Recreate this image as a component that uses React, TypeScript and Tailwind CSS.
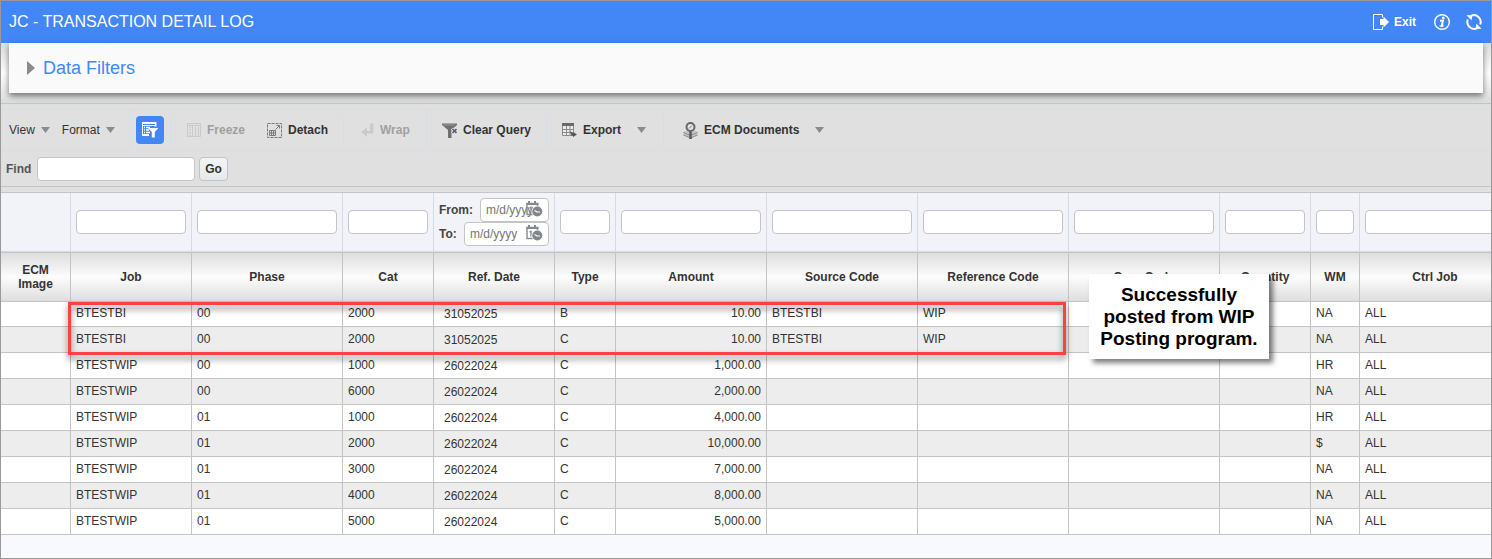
import { ReactNode } from 'react'

type Column = {
  key: string
  label: string
  width: string
  pad?: string
  filter: 'none' | 'text' | 'date'
}

const columns: Column[] = [
  { key: 'image', label: 'ECM Image', width: 'w-[70px]', filter: 'none' },
  { key: 'job', label: 'Job', width: 'w-[121px]', filter: 'text' },
  { key: 'phase', label: 'Phase', width: 'w-[151px]', filter: 'text' },
  { key: 'cat', label: 'Cat', width: 'w-[91px]', filter: 'text' },
  { key: 'date', label: 'Ref. Date', width: 'w-[121px]', pad: 'pl-[10px] pr-[5px] py-0', filter: 'date' },
  { key: 'type', label: 'Type', width: 'w-[61px]', filter: 'text' },
  { key: 'amount', label: 'Amount', width: 'w-[151px]', pad: 'px-[5px] pt-0 pb-[2px] text-right', filter: 'text' },
  { key: 'source', label: 'Source Code', width: 'w-[151px]', filter: 'text' },
  { key: 'reference', label: 'Reference Code', width: 'w-[151px]', filter: 'text' },
  { key: 'oper', label: 'Oper Code', width: 'w-[151px]', filter: 'text' },
  { key: 'quantity', label: 'Quantity', width: 'w-[91px]', filter: 'text' },
  { key: 'wm', label: 'WM', width: 'w-[49px]', filter: 'text' },
  { key: 'ctrlJob', label: 'Ctrl Job', width: 'w-[151px]', filter: 'text' },
]

const rows: Record<string, string>[] = [
  { job: 'BTESTBI', phase: '00', cat: '2000', date: '31052025', type: 'B', amount: '10.00', source: 'BTESTBI', reference: 'WIP', wm: 'NA', ctrlJob: 'ALL' },
  { job: 'BTESTBI', phase: '00', cat: '2000', date: '31052025', type: 'C', amount: '10.00', source: 'BTESTBI', reference: 'WIP', wm: 'NA', ctrlJob: 'ALL' },
  { job: 'BTESTWIP', phase: '00', cat: '1000', date: '26022024', type: 'C', amount: '1,000.00', wm: 'HR', ctrlJob: 'ALL' },
  { job: 'BTESTWIP', phase: '00', cat: '6000', date: '26022024', type: 'C', amount: '2,000.00', wm: 'NA', ctrlJob: 'ALL' },
  { job: 'BTESTWIP', phase: '01', cat: '1000', date: '26022024', type: 'C', amount: '4,000.00', wm: 'HR', ctrlJob: 'ALL' },
  { job: 'BTESTWIP', phase: '01', cat: '2000', date: '26022024', type: 'C', amount: '10,000.00', wm: '$', ctrlJob: 'ALL' },
  { job: 'BTESTWIP', phase: '01', cat: '3000', date: '26022024', type: 'C', amount: '7,000.00', wm: 'NA', ctrlJob: 'ALL' },
  { job: 'BTESTWIP', phase: '01', cat: '4000', date: '26022024', type: 'C', amount: '8,000.00', wm: 'NA', ctrlJob: 'ALL' },
  { job: 'BTESTWIP', phase: '01', cat: '5000', date: '26022024', type: 'C', amount: '5,000.00', wm: 'NA', ctrlJob: 'ALL' },
]

const inputClass = 'h-6 rounded-[4px] border border-[#c4c4c4] bg-white px-[5px] text-xs outline-none placeholder:text-[#757575]'

function Caret() {
  return (
    <svg width="9" height="6" viewBox="0 0 9 6" className="shrink-0">
      <path d="M0 0h9L4.500 6z" fill="#878c91" />
    </svg>
  )
}

function ExitIcon() {
  return (
    <svg width="16" height="16" viewBox="0 0 16 16">
      <path d="M9.500 3.500V.5h-9v15h9v-3" fill="none" stroke="#fff" />
      <path d="M7 5h3.500V2.500L16 8l-5.500 5.500V11H7z" fill="#fff" />
    </svg>
  )
}

function InfoIcon() {
  return (
    <svg width="16" height="16" viewBox="0 0 16 16">
      <circle cx="8" cy="8" r="7.300" fill="none" stroke="#fff" strokeWidth="1.400" />
      <circle cx="9.200" cy="4" r="1.400" fill="#fff" />
      <path d="M6 6.700h3L7.700 11.700h1.800" fill="none" stroke="#fff" strokeWidth="1.900" />
      <path d="M5.500 12h3.500" stroke="#fff" strokeWidth="1.300" />
    </svg>
  )
}

function RefreshIcon() {
  return (
    <svg width="16" height="16" viewBox="0 0 16 16">
      <path d="M5.500 1.500A6.900 6.900 0 0 1 14.200 10.500M10.500 14.500A6.900 6.900 0 0 1 1.800 5.500" fill="none" stroke="#fff" strokeWidth="2" />
      <path d="M.5 1.200l6-.2-1 5.200z" fill="#fff" />
      <path d="M15.500 14.800l-6 .2 1-5.200z" fill="#fff" />
    </svg>
  )
}

function QueryByExampleIcon() {
  return (
    <svg width="16" height="16" viewBox="0 0 16 16">
      <path d="M13.500 4.500V0H0v13h7" fill="none" stroke="#fff" strokeWidth="2" />
      <path d="M0 0h14v4H0z" fill="#fff" />
      <path d="M1 2.500h12" stroke="#4287f5" />
      <path d="M2 5.500h1M4 5.500h4M2 8h1M4 8h3M2 10.500h1M4 10.500h4" stroke="#fff" strokeWidth="1.400" />
      <path d="M6 6h10.500l-3.700 4v5.500h-3V10z" fill="#fff" />
    </svg>
  )
}

function FreezeIcon() {
  return (
    <svg width="14" height="14" viewBox="0 0 14 14" stroke="#cacaca" fill="none">
      <path d="M.5.5h13v13H.5zM.5 2.500h13M5.500 3v10M8.500 4v9M11.500 4v9" />
      <path d="M2 5l2-1M2 8l2-2M2 11l2-2M2 13l2-1" />
    </svg>
  )
}

function DetachIcon() {
  return (
    <svg width="15" height="15" viewBox="0 0 15 15" fill="none" stroke="#7b7b7b">
      <path d="M.5.5h14v14H.5z" strokeDasharray="3 1" />
      <path d="M2.500 7.500h6v5h-6zM2.500 10h6M4.500 7.500v5M6.500 7.500v5" />
      <path d="M8.500 6.500l4-4M9.500 2.500h3v3" />
    </svg>
  )
}

function WrapIcon() {
  return (
    <svg width="13" height="14" viewBox="0 0 13 14" fill="#cacaca">
      <path d="M9 .5h3.500v10H6V14L0 9l6-4.500V8h3z" />
    </svg>
  )
}

function ClearQueryIcon() {
  return (
    <svg width="15" height="15" viewBox="0 0 15 15">
      <path d="M0 .5h15v1.500L9.500 7v8H6V7L0 2z" fill="#6f6f6f" />
      <path d="M1 2h12" stroke="#9a9a9a" />
      <path d="M10 5.500l5 5M15 5.500l-5 5" stroke="#e0e0e0" strokeWidth="3" />
      <path d="M10.500 6l4 4M14.500 6l-4 4" stroke="#5f5f5f" strokeWidth="1.700" />
    </svg>
  )
}

function ExportIcon() {
  return (
    <svg width="15" height="14" viewBox="0 0 15 14">
      <path d="M.5.500h11v12H.5zM.5 6.500h11M.5 9.500h11M4.500 3v9.500M8 3v9.500" fill="#ececec" stroke="#8a8a8a" />
      <path d="M0 0h12v3H0z" fill="#6a6a6a" />
      <path d="M7.500 7.500l3.500 3v-1.500l4 2.500-4 2.500v-1.500H9.500z" fill="#555" />
    </svg>
  )
}

function DocumentsIcon() {
  return (
    <svg width="15" height="17" viewBox="0 0 15 17">
      <path d="M.5 10L4 8.500l3.500 3L11 8.500l3.500 1.500v3.500l-7 3-7-3z" fill="#c4c4c4" />
      <path d="M.5 10.500l7 3 7-3M.5 13l7 3 7-3" fill="none" stroke="#8d8d8d" />
      <circle cx="7.500" cy="5" r="4" fill="#e6e6e6" stroke="#666" strokeWidth="2" />
      <path d="M7.500 9v8" stroke="#5d5d5d" strokeWidth="2.600" />
      <path d="M6 6.500l3-3" stroke="#777" />
    </svg>
  )
}

function CalendarIcon() {
  return (
    <svg width="17" height="16" viewBox="0 0 17 16">
      <path d="M1 2.500h10.500v11H1z" fill="none" stroke="#858a8f" strokeWidth="1.400" />
      <path d="M.5 2h12v2H.5zM2 0h2v3H2zM8 0h2v3H8z" fill="#858a8f" />
      <path d="M3.500 7L5 6.300v5.200" fill="none" stroke="#858a8f" strokeWidth="1.400" />
      <circle cx="11.300" cy="10.500" r="5.700" fill="#fff" />
      <circle cx="11.300" cy="10.500" r="5" fill="#7f858a" />
      <path d="M8.500 9.500l2.500 1.500h3" fill="none" stroke="#fff" strokeWidth="1.200" />
    </svg>
  )
}

function ToolButton({ icon, label, disabled }: { icon: ReactNode; label: string; disabled?: boolean }) {
  return (
    <button
      disabled={disabled}
      className="flex items-center gap-[6px] font-bold text-[#333] disabled:text-[#a0a0a0]"
    >
      {icon}
      {label}
    </button>
  )
}

function DateFilter({ id, label, width }: { id: string; label: string; width: string }) {
  return (
    <div className="flex items-center justify-between">
      <label htmlFor={id} className="font-bold text-[#444]">{label}</label>
      <div className={`relative flex ${width}`}>
        <input id={id} placeholder="m/d/yyyy" className={`${inputClass} w-full`} />
        <button aria-label="Select date" className="absolute right-[6px] top-[3px]">
          <CalendarIcon />
        </button>
      </div>
    </div>
  )
}

export default function App() {
  return (
    <div className="overflow-hidden border border-[#999] bg-[#f8f9fe] font-['Liberation_Sans',Arial,sans-serif] text-xs text-[#333]">
      <header className="flex h-[42px] items-center justify-between bg-[#4287f5] pl-2 pr-[9px] text-white">
        <h1 className="text-base">JC - TRANSACTION DETAIL LOG</h1>
        <div className="flex items-center">
          <button className="mr-[18px] flex items-center gap-[5px] font-bold">
            <ExitIcon />
            Exit
          </button>
          <button aria-label="Info" className="mr-4"><InfoIcon /></button>
          <button aria-label="Refresh"><RefreshIcon /></button>
        </div>
      </header>

      <section className="border-b border-[#c4c4c4] bg-linear-to-b from-[#dcdcdc] via-white to-[#dcdcdc] px-2 pb-[10px]">
        <div className="flex h-[50px] items-center bg-[#fafafa] pl-[18px] shadow-[0_3px_6px_rgba(0,0,0,0.5)]">
          <button className="flex items-center gap-2 text-lg text-[#4287f5]">
            <svg width="8" height="14" viewBox="0 0 8 14">
              <path d="M0 0l8 7-8 7z" fill="#878c91" />
            </svg>
            Data Filters
          </button>
        </div>
      </section>

      <div className="border-b border-[#c4c4c4] bg-[#e0e0e0] pt-[5px]">
        <div className="flex h-[42px] items-center border-y border-[#d6dfe9]">
          <div className="flex h-full w-[129px] items-center gap-3 border-r border-[#d6dfe9] pl-2">
            <button className="flex items-center gap-[6px]">View <Caret /></button>
            <button className="flex items-center gap-[6px]">Format <Caret /></button>
          </div>
          <div className="flex h-7 w-[41px] items-center justify-center border-r border-[#d6dfe9]">
            <button aria-label="Query by example" className="flex size-7 items-center justify-center rounded-[4px] bg-[#4287f5]">
              <QueryByExampleIcon />
            </button>
          </div>
          <div className="flex h-7 w-[173px] items-center gap-[22px] border-r border-[#d6dfe9] pl-4">
            <ToolButton icon={<FreezeIcon />} label="Freeze" disabled />
            <ToolButton icon={<DetachIcon />} label="Detach" />
          </div>
          <div className="flex h-full w-[83px] items-center border-r border-[#d6dfe9] pl-[17px]">
            <ToolButton icon={<WrapIcon />} label="Wrap" disabled />
          </div>
          <div className="flex h-8 w-[120px] items-center border-r border-[#d6dfe9] pl-[15px]">
            <ToolButton icon={<ClearQueryIcon />} label="Clear Query" />
          </div>
          <div className="flex h-8 w-[117px] items-center gap-4 border-r border-[#d6dfe9] pl-[15px]">
            <ToolButton icon={<ExportIcon />} label="Export" />
            <button aria-label="Export options"><Caret /></button>
          </div>
          <div className="flex items-center gap-4 pl-[19px]">
            <ToolButton icon={<DocumentsIcon />} label="ECM Documents" />
            <button aria-label="Document options"><Caret /></button>
          </div>
        </div>
        <div className="flex h-[35px] items-center pl-[5px]">
          <label htmlFor="find" className="w-[31px] font-bold text-[#555]">Find</label>
          <input id="find" className={`${inputClass} w-[158px]`} />
          <button className="ml-1 h-6 w-[29px] rounded-[4px] border border-[#c4c4c4] bg-linear-to-b from-[#f3f4f6] to-[#e6e9ec] font-bold">
            Go
          </button>
        </div>
      </div>
      <div className="h-[6px] border-b border-[#c4c4c4] bg-[#e0e0e0]" />

      <div className="relative overflow-hidden pb-[23px]">
        <table className="w-[1510px] table-fixed border-separate border-spacing-0">
          <thead>
            <tr className="h-[59px] bg-[#f2f3f8]">
              {columns.map(c => (
                <td key={c.key} className={`${c.width} border-b border-r border-[#d3dce6] px-[5px] py-0 align-middle`}>
                  {c.filter === 'text' && <input aria-label={`Filter ${c.label}`} className={`${inputClass} block w-full`} />}
                  {c.filter === 'date' && (
                    <>
                      <DateFilter id="date-from" label="From:" width="w-[69px]" />
                      <DateFilter id="date-to" label="To:" width="w-[85px]" />
                    </>
                  )}
                </td>
              ))}
            </tr>
            <tr className="h-[50px]">
              {columns.map(c => (
                <th
                  key={c.key}
                  scope="col"
                  className="border-y border-r border-[#c4c4c4] bg-linear-to-b from-[#dedede] via-[#fcfcfc] to-[#dedede] px-3 py-0 align-middle leading-[14px]"
                >
                  {c.label}
                </th>
              ))}
            </tr>
          </thead>
          <tbody>
            {rows.map((row, i) => (
              <tr key={i} className="h-[26px] bg-white first:h-[25px] even:bg-[#ededed]">
                {columns.map(c => (
                  <td key={c.key} className={`border-b border-r border-[#c4c4c4] align-middle ${c.pad ?? 'px-[5px] pt-0 pb-[2px]'}`}>
                    {row[c.key]}
                  </td>
                ))}
              </tr>
            ))}
          </tbody>
        </table>

        {/* highlight around the two posted rows */}
        <div className="pointer-events-none absolute left-[67px] top-[109px] h-[53px] w-[998px] border-3 border-[#ff4141] drop-shadow-[0_4px_3px_rgba(0,0,0,0.5)]" />
        <div className="absolute left-[1088px] top-[81px] w-[180px] bg-white pb-[9px] pt-[10px] text-center text-[19px] font-bold leading-[22px] text-black shadow-[4px_4px_5px_rgba(0,0,0,0.5)]">
          Successfully posted from WIP Posting program.
        </div>
      </div>
    </div>
  )
}
